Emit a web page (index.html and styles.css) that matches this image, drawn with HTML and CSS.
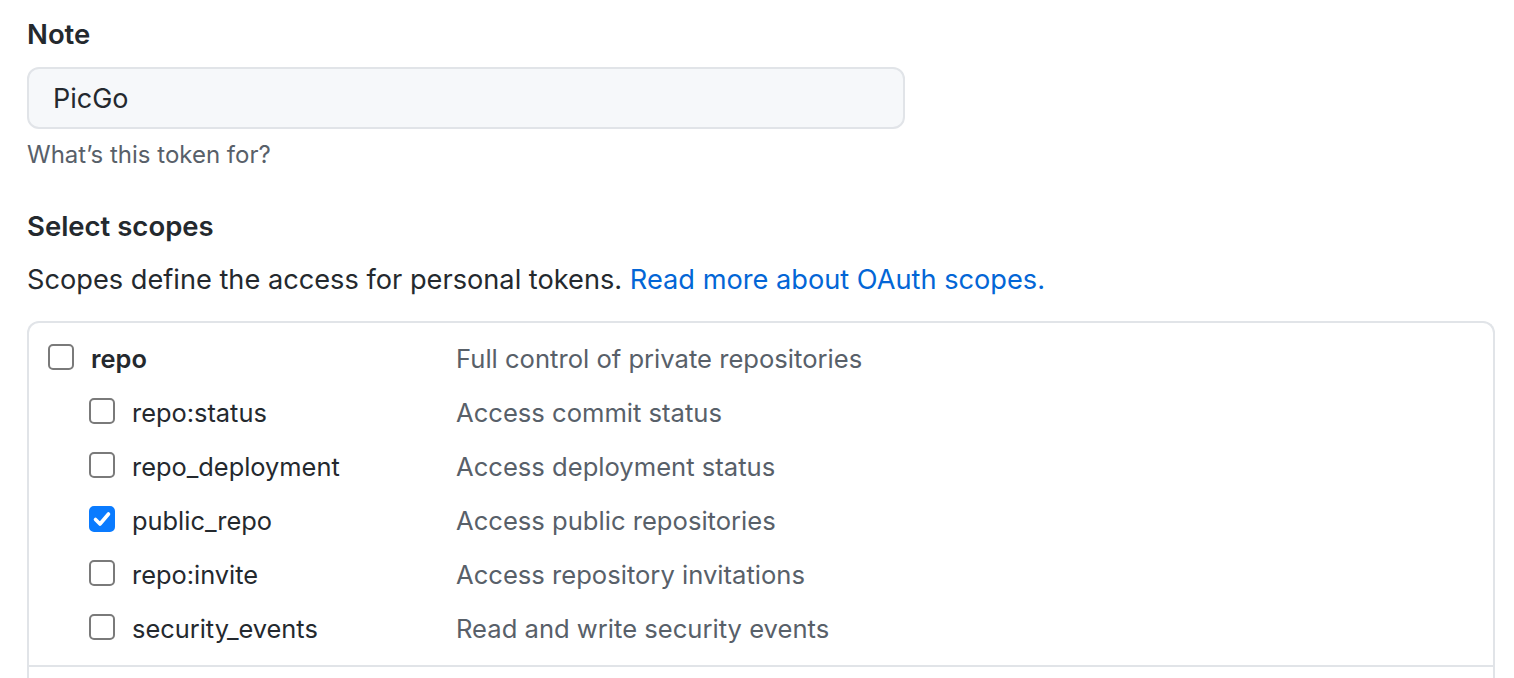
FILE: index.html
```html
<!DOCTYPE html>
<html lang="en">
<head>
<meta charset="utf-8">
<title>New personal access token</title>
<link rel="stylesheet" href="styles.css">
</head>
<body>
<form class="form">
  <div class="field">
    <label class="label" for="note">Note</label>
    <input id="note" class="input" type="text" value="PicGo">
    <p class="hint">What’s this token for?</p>
  </div>

  <h3 class="label scopes-title">Select scopes</h3>
  <p class="intro">Scopes define the access for personal tokens. <a class="link" href="#">Read more about OAuth scopes.</a></p>

  <div class="scopes">
    <div class="group">
      <div class="row">
        <label class="name parent"><span class="cb"></span><span class="scope bold">repo</span></label>
        <span class="desc">Full control of private repositories</span>
      </div>
      <div class="row">
        <label class="name child"><span class="cb"></span><span class="scope">repo:status</span></label>
        <span class="desc">Access commit status</span>
      </div>
      <div class="row">
        <label class="name child"><span class="cb"></span><span class="scope">repo_deployment</span></label>
        <span class="desc">Access deployment status</span>
      </div>
      <div class="row">
        <label class="name child"><span class="cb checked"><svg viewBox="0 0 26 26" width="26" height="26"><path d="M6.5 13.5 L11 18 L19.5 8" fill="none" stroke="#fff" stroke-width="3.6" stroke-linecap="round" stroke-linejoin="round"/></svg></span><span class="scope">public_repo</span></label>
        <span class="desc">Access public repositories</span>
      </div>
      <div class="row">
        <label class="name child"><span class="cb"></span><span class="scope">repo:invite</span></label>
        <span class="desc">Access repository invitations</span>
      </div>
      <div class="row">
        <label class="name child"><span class="cb"></span><span class="scope">security_events</span></label>
        <span class="desc">Read and write security events</span>
      </div>
    </div>
    <div class="group next"></div>
  </div>
</form>
</body>
</html>
```

FILE: styles.css
```css
html, body {
  margin: 0;
  padding: 0;
  background: #fff;
}

body {
  font-family: Inter, "Noto Sans", "Liberation Sans", sans-serif;
  color: #24292e;
  overflow: hidden;
}

.form {
  padding: 14px 0 0 27px;
  width: 1468px;
}

.field {
  display: flex;
  flex-direction: column;
  align-items: flex-start;
}

.label {
  display: block;
  margin: 0;
  font-size: 27.5px;
  font-weight: 600;
  line-height: 40px;
  color: #24292e;
}

.input {
  margin-top: 13px;
  box-sizing: border-box;
  width: 878px;
  height: 62px;
  border: 2px solid #e1e4e8;
  border-radius: 12px;
  background: #f6f8fa;
  padding: 0 0 0 24px;
  font-family: inherit;
  font-size: 27px;
  color: #24292e;
  outline: none;
}

.hint {
  margin: 8px 0 0;
  font-size: 24px;
  line-height: 36px;
  color: #586069;
}

.scopes-title {
  margin-top: 33px;
}

.intro {
  margin: 14px 0 0;
  font-size: 27.2px;
  line-height: 40px;
  color: #24292e;
}

.link {
  color: #0366d6;
  text-decoration: none;
}

.scopes {
  margin-top: 21px;
  border: 2px solid #e1e4e8;
  border-bottom: none;
  border-radius: 12px 12px 0 0;
}

.group {
  padding: 8px 0 10px;
  border-bottom: 2px solid #e1e4e8;
}

.group.next {
  height: 40px;
  padding: 0;
  border-bottom: none;
}

.row {
  display: flex;
  align-items: center;
  height: 54px;
}

.name {
  display: flex;
  align-items: center;
  box-sizing: border-box;
  width: 427px;
  flex: none;
}

.name.parent {
  padding-left: 19px;
}

.name.child {
  padding-left: 60px;
}

.cb {
  box-sizing: border-box;
  width: 26px;
  height: 26px;
  border: 2px solid #7a7a7a;
  border-radius: 5px;
  background: #fff;
  flex: none;
  margin-top: -2px;
  display: flex;
  align-items: center;
  justify-content: center;
}

.cb.checked {
  background: #0a7bff;
  border-color: #0a7bff;
}

.cb.checked svg {
  flex: none;
  margin: -2px;
}

.scope {
  margin-left: 17px;
  font-size: 25.4px;
  color: #24292e;
}

.scope.bold {
  font-weight: 600;
}

.desc {
  font-size: 25.6px;
  color: #586069;
}
```
